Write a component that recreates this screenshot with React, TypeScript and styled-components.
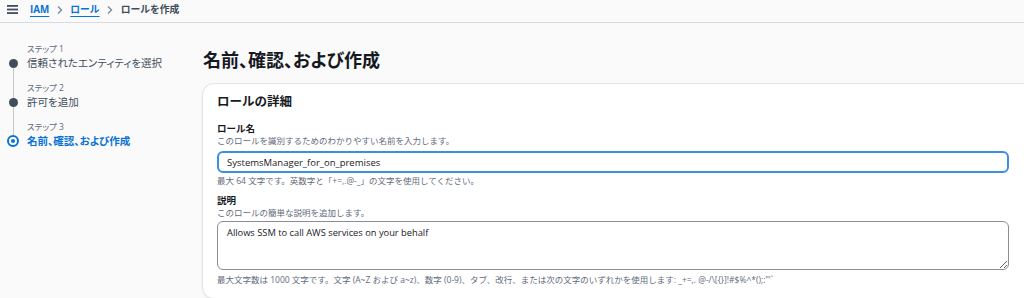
import { useEffect, useRef } from "react";
import styled, { createGlobalStyle } from "styled-components";

const steps = [
  { label: "ステップ 1", title: "信頼されたエンティティを選択" },
  { label: "ステップ 2", title: "許可を追加" },
  { label: "ステップ 3", title: "名前、確認、および作成" },
];

const roleName = "SystemsManager_for_on_premises";

const App = () => {
  const inputRef = useRef<HTMLInputElement>(null);

  useEffect(() => {
    const el = inputRef.current;
    if (el) {
      el.focus();
      el.setSelectionRange(roleName.length, roleName.length);
    }
  }, []);

  return (
    <Page>
      <GlobalStyle />
      <TopBar>
        <Menu width="11" height="9" viewBox="0 0 11 9">
          <rect x="0" y="0" width="11" height="1.8" fill="#414d5c" />
          <rect x="0" y="3.6" width="11" height="1.8" fill="#414d5c" />
          <rect x="0" y="7.2" width="11" height="1.8" fill="#414d5c" />
        </Menu>
        <Crumbs>
          <CrumbLink>IAM</CrumbLink>
          <Chevron width="6" height="10" viewBox="0 0 6 10">
            <path d="M1 1.5 L4.5 5 L1 8.5" fill="none" stroke="#7d8998" strokeWidth="1.4" />
          </Chevron>
          <CrumbLink>ロール</CrumbLink>
          <Chevron width="6" height="10" viewBox="0 0 6 10">
            <path d="M1 1.5 L4.5 5 L1 8.5" fill="none" stroke="#7d8998" strokeWidth="1.4" />
          </Chevron>
          <CrumbCurrent>ロールを作成</CrumbCurrent>
        </Crumbs>
      </TopBar>

      <Body>
        <Sidebar>
          {steps.map((s, i) => (
            <Step key={s.label} $last={i === steps.length - 1}>
              <StepLabel>{s.label}</StepLabel>
              <Marker>{i === steps.length - 1 ? <Ring /> : <Dot />}</Marker>
              <StepTitle $active={i === steps.length - 1}>{s.title}</StepTitle>
            </Step>
          ))}
        </Sidebar>

        <Main>
          <Heading>名前、確認、および作成</Heading>
          <Card>
            <CardTitle>ロールの詳細</CardTitle>

            <Label>ロール名</Label>
            <Desc>このロールを識別するためのわかりやすい名前を入力します。</Desc>
            <TextInput ref={inputRef} defaultValue={roleName} />
            <Hint>最大 64 文字です。英数字と「+=,.@-_」の文字を使用してください。</Hint>

            <Label $gap>説明</Label>
            <Desc>このロールの簡単な説明を追加します。</Desc>
            <TextArea defaultValue="Allows SSM to call AWS services on your behalf" />
            <Hint $gap>
              最大文字数は 1000 文字です。文字 (A~Z および a~z)、数字 (0-9)、タブ、改行、または次の文字のいずれかを使用します: _+=,. @-/\[{"{}"}]!#$%^*();:"'`
            </Hint>
          </Card>
        </Main>
      </Body>
    </Page>
  );
};

const GlobalStyle = createGlobalStyle`
  html, body {
    margin: 0;
    padding: 0;
    overflow: hidden;
    background: #fafafa;
  }
  body {
    font-family: "Open Sans", "Noto Sans CJK JP", sans-serif;
    color: #16191f;
  }
`;

const Page = styled.div`
  width: 1024px;
  height: 298px;
  overflow: hidden;
  background: #fafafa;
`;

const TopBar = styled.div`
  height: 23px;
  box-sizing: border-box;
  border-bottom: 1px solid #d9d9de;
  display: flex;
  align-items: center;
  padding-left: 7px;
  padding-bottom: 3px;
`;

const Menu = styled.svg`
  display: block;
`;

const Crumbs = styled.div`
  display: flex;
  align-items: center;
  gap: 7.5px;
  margin-left: 12px;
  font-size: 9.8px;
  line-height: 14px;
`;

const CrumbLink = styled.span`
  color: #0972d3;
  font-weight: 700;
  text-decoration: underline;
  text-decoration-color: #0972d3;
  text-underline-offset: 3px;
`;

const CrumbCurrent = styled.span`
  color: #414d5c;
  font-weight: 700;
`;

const Chevron = styled.svg`
  display: block;
`;

const Body = styled.div`
  display: flex;
`;

const Sidebar = styled.div`
  width: 202px;
  flex-shrink: 0;
  padding: 20px 0 0 8px;
  box-sizing: border-box;
  display: flex;
  flex-direction: column;
  gap: 11px;
`;

const Step = styled.div<{ $last: boolean }>`
  position: relative;
  display: grid;
  grid-template-columns: 10px 1fr;
  column-gap: 9px;
  grid-template-rows: 12px 16px;

  &::after {
    content: "";
    display: ${(p) => (p.$last ? "none" : "block")};
    position: absolute;
    left: 4.5px;
    top: 25px;
    width: 1px;
    height: 33px;
    background: #c6c6cd;
  }
`;

const StepLabel = styled.div`
  grid-column: 2;
  grid-row: 1;
  font-size: 8.5px;
  line-height: 12px;
  font-feature-settings: "palt";
  color: #5f6b7a;
`;

const Marker = styled.div`
  grid-column: 1;
  grid-row: 2;
  display: flex;
  align-items: center;
  justify-content: center;
`;

const Dot = styled.span`
  width: 9px;
  height: 9px;
  border-radius: 50%;
  background: #414d5c;
`;

const Ring = styled.span`
  flex-shrink: 0;
  width: 12px;
  height: 12px;
  box-sizing: border-box;
  border-radius: 50%;
  border: 2px solid #0972d3;
  background: #fff;
  display: flex;
  align-items: center;
  justify-content: center;

  &::before {
    content: "";
    width: 4px;
    height: 4px;
    border-radius: 50%;
    background: #0972d3;
  }
`;

const StepTitle = styled.div<{ $active: boolean }>`
  grid-column: 2;
  grid-row: 2;
  font-size: 10.5px;
  line-height: 16px;
  white-space: nowrap;
  font-feature-settings: "palt";
  color: ${(p) => (p.$active ? "#0972d3" : "#414d5c")};
  font-weight: ${(p) => (p.$active ? 700 : 400)};
`;

const Main = styled.div`
  padding-top: 25px;
  flex-shrink: 0;
`;

const Heading = styled.h1`
  margin: 0 0 11px 1px;
  font-size: 18px;
  line-height: 24px;
  font-weight: 700;
  font-feature-settings: "palt";
  color: #16191f;
`;

const Card = styled.div`
  width: 792px;
  padding: 9px 40px 12px 14px;
  background: #fff;
  border: 1px solid #e3e3e7;
  border-radius: 12px;
  display: flex;
  flex-direction: column;
  box-shadow: 0 1px 2px rgba(0, 7, 22, 0.06);
`;

const CardTitle = styled.h2`
  margin: 0 0 11px;
  font-size: 12.5px;
  line-height: 18px;
  font-weight: 700;
`;

const Label = styled.div<{ $gap?: boolean }>`
  margin-top: ${(p) => (p.$gap ? "7px" : "0")};
  font-size: 9.5px;
  line-height: 13px;
  font-weight: 700;
  color: #16191f;
`;

const Desc = styled.div`
  font-size: 8.5px;
  line-height: 12px;
  color: #5f6b7a;
`;

const TextInput = styled.input`
  margin-top: 4px;
  height: 22px;
  box-sizing: border-box;
  padding: 0 8px;
  border: 2px solid #3a8ee6;
  border-radius: 6px;
  font-family: "Open Sans", "Noto Sans CJK JP", sans-serif;
  font-size: 9.5px;
  color: #16191f;
  outline: none;
  background: #fff;
`;

const TextArea = styled.textarea`
  margin-top: 2px;
  height: 49px;
  box-sizing: border-box;
  padding: 4px 9px;
  border: 1px solid #8c8c94;
  border-radius: 6px;
  font-family: "Open Sans", "Noto Sans CJK JP", sans-serif;
  font-size: 9.3px;
  line-height: 13px;
  color: #16191f;
  outline: none;
  resize: vertical;
  background: #fff;
`;

const Hint = styled.div<{ $gap?: boolean }>`
  margin-top: ${(p) => (p.$gap ? "4px" : "2px")};
  font-size: 8.5px;
  line-height: 12px;
  color: #5f6b7a;
  white-space: nowrap;
`;

export default App;
